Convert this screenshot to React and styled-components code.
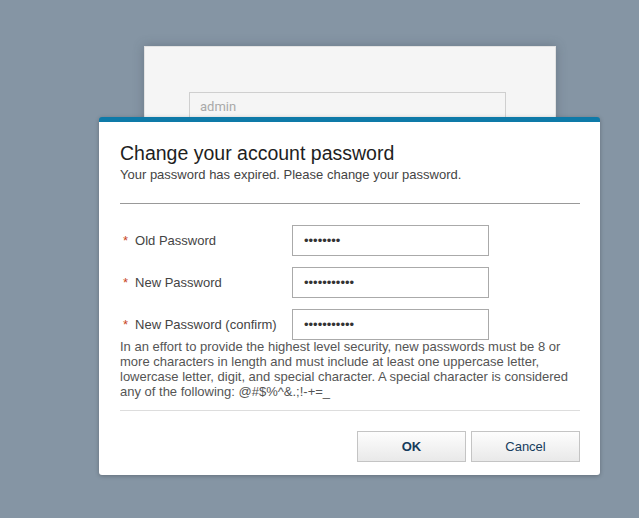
import styled, { createGlobalStyle } from 'styled-components';

const GlobalStyle = createGlobalStyle`
  html, body {
    margin: 0;
    padding: 0;
  }
  body {
    background: #8595a4;
    font-family: "Liberation Sans", Arial, sans-serif;
  }
`;

const Page = styled.div`
  width: 639px;
  height: 518px;
  overflow: hidden;
  position: relative;
  background: #8595a4;
  padding-top: 46px;
  box-sizing: border-box;
`;

const LoginCard = styled.div`
  width: 412px;
  height: 300px;
  margin-left: 144px;
  box-sizing: border-box;
  background: #f5f5f5;
  border: 1px solid #e2e2e2;
  box-shadow: 0 0 10px rgba(60, 70, 80, 0.35);
  padding: 45px 0 0 44px;
`;

const LoginInput = styled.div`
  width: 317px;
  height: 34px;
  box-sizing: border-box;
  border: 1px solid #cfcfcf;
  padding: 6px 10px;
  font-family: Roboto, "Liberation Sans", sans-serif;
  font-size: 13px;
  color: #a9a9a9;
`;

const Dialog = styled.div`
  position: absolute;
  left: 99px;
  top: 117px;
  width: 501px;
  height: 358px;
  box-sizing: border-box;
  background: #fff;
  border-top: 5px solid #0e7aa8;
  border-radius: 3px;
  box-shadow: 0 1px 4px rgba(0, 0, 0, 0.25);
  padding: 18px 20px 0 21px;
`;

const Title = styled.h1`
  margin: 0;
  font-size: 19.5px;
  font-weight: normal;
  color: #1e1e1e;
  line-height: 26px;
`;

const Subtitle = styled.p`
  margin: 0;
  font-size: 13px;
  color: #444;
  line-height: 17px;
`;

const Divider = styled.hr`
  border: 0;
  border-top: 1px solid ${(p) => p.$color || '#999'};
  margin: ${(p) => p.$margin || '0'};
`;

const Form = styled.div`
  display: flex;
  flex-direction: column;
  gap: 11px;
`;

const Row = styled.div`
  display: grid;
  grid-template-columns: 172px 197px;
  align-items: center;
`;

const Label = styled.label`
  font-size: 13px;
  color: #444;
  padding-left: 3px;
  display: flex;
  gap: 7px;
`;

const Star = styled.span`
  color: #c8461e;
`;

const PasswordInput = styled.input`
  width: 197px;
  height: 31px;
  box-sizing: border-box;
  border: 1px solid #aaa;
  padding: 0 11px;
  font-family: "Liberation Sans", Arial, sans-serif;
  font-size: 13px;
  color: #333;
  outline: none;
  margin: 0;
`;

const Help = styled.p`
  margin: -1px 0 0;
  font-size: 13px;
  line-height: 15px;
  color: #555;
`;

const Footer = styled.div`
  display: flex;
  justify-content: flex-end;
  gap: 5px;
  padding-top: 20px;
`;

const Button = styled.button`
  width: 109px;
  height: 31px;
  border: 1px solid #c4c4c4;
  background: linear-gradient(#fdfdfd, #e9e9e9);
  font-family: "Liberation Sans", Arial, sans-serif;
  font-size: 13px;
  font-weight: ${(p) => (p.$primary ? 'bold' : 'normal')};
  color: #163c5c;
  cursor: pointer;
  padding: 0;
`;

const fields = [
  { label: 'Old Password', value: '12345678' },
  { label: 'New Password', value: '12345678901' },
  { label: 'New Password (confirm)', value: '12345678901' },
];

const App = () => {
  return (
    <>
      <GlobalStyle />
      <Page>
        <LoginCard>
          <LoginInput>admin</LoginInput>
        </LoginCard>
        <Dialog>
          <Title>Change your account password</Title>
          <Subtitle>Your password has expired. Please change your password.</Subtitle>
          <Divider $margin="20px 0 21px" />
          <Form>
            {fields.map((f) => (
              <Row key={f.label}>
                <Label>
                  <Star>*</Star>
                  {f.label}
                </Label>
                <PasswordInput type="password" defaultValue={f.value} readOnly />
              </Row>
            ))}
          </Form>
          <Help>
            In an effort to provide the highest level security, new passwords must be 8 or
            more characters in length and must include at least one uppercase letter,
            lowercase letter, digit, and special character. A special character is considered
            any of the following: @#$%^&amp;.;!-+=_
          </Help>
          <Divider $color="#ddd" $margin="11px 0 0" />
          <Footer>
            <Button $primary>OK</Button>
            <Button>Cancel</Button>
          </Footer>
        </Dialog>
      </Page>
    </>
  );
};

export default App;
